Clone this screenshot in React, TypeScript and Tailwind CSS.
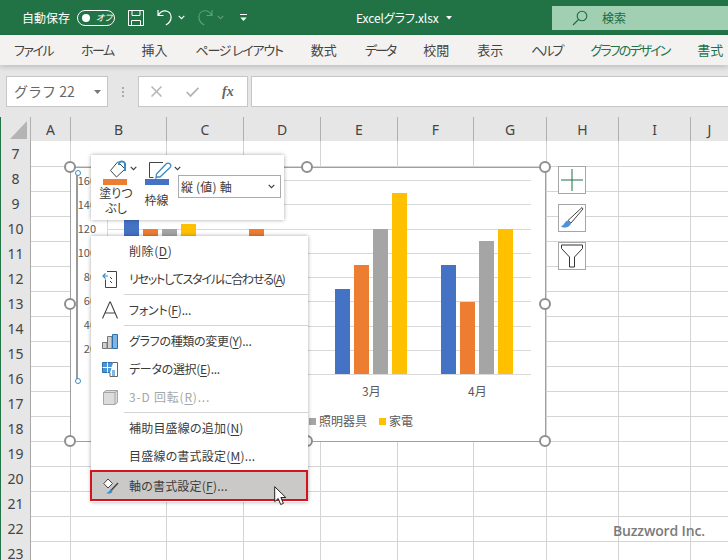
import React from "react";

const font = "[font-family:'Noto_Sans_CJK_JP',sans-serif] [font-feature-settings:'palt']";

const tabs = [
  { t: "ファイル", c: "tracking-[-1.5px]" },
  { t: "ホーム", c: "tracking-[-1.6px]" },
  { t: "挿入", c: "" },
  { t: "ページ レイアウト", c: "tracking-[-1.2px]" },
  { t: "数式", c: "" },
  { t: "データ", c: "tracking-[-2px]" },
  { t: "校閲", c: "" },
  { t: "表示", c: "" },
  { t: "ヘルプ", c: "tracking-[-2px]" },
  { t: "グラフのデザイン", c: "tracking-[-1.9px] text-[#217346]" },
  { t: "書式", c: "text-[#217346]" },
];
const cols = ["A", "B", "C", "D", "E", "F", "G", "H", "I", "J"];
const rows = [7, 8, 9, 10, 11, 12, 13, 14, 15, 16, 17, 18, 19, 20, 21, 22, 23];
const yLabels = ["160", "140", "120", "100", "80", "60", "40", "20"];

const groups = [
  [{ h: 160, c: "bg-[#4472c4]" }, { h: 145, c: "bg-[#ed7d31]" }, { h: 145, c: "bg-[#a5a5a5]" }, { h: 150, c: "bg-[#ffc000]" }],
  [{ h: 120, c: "bg-[#4472c4]" }, { h: 145, c: "bg-[#ed7d31]" }, { h: 100, c: "bg-[#a5a5a5]" }, { h: 120, c: "bg-[#ffc000]" }],
  [{ h: 85, c: "bg-[#4472c4]" }, { h: 109, c: "bg-[#ed7d31]" }, { h: 145, c: "bg-[#a5a5a5]" }, { h: 181, c: "bg-[#ffc000]" }],
  [{ h: 109, c: "bg-[#4472c4]" }, { h: 72, c: "bg-[#ed7d31]" }, { h: 133, c: "bg-[#a5a5a5]" }, { h: 145, c: "bg-[#ffc000]" }],
];

function Chevron({ className = "" }: { className?: string }) {
  return (
    <svg className={className} width="7" height="5" viewBox="0 0 7 5" fill="none" stroke="currentColor" strokeWidth="1.1">
      <path d="M0.7 0.8 3.5 3.6 6.3 0.8" />
    </svg>
  );
}

function Handle({ className }: { className: string }) {
  return <div className={`absolute w-[12px] h-[12px] rounded-full bg-white border-2 border-[#8f8f8f] ${className}`} />;
}

function Accel({ label, k, after = "", className = "tracking-[0.2px]" }: { label: string; k: string; after?: string; className?: string }) {
  return (
    <span className={className}>
      {label}(<span className="underline underline-offset-2">{k}</span>){after}
    </span>
  );
}

function MenuItem({ icon, children, muted, selected }: { icon?: React.ReactNode; children: React.ReactNode; muted?: boolean; selected?: boolean }) {
  return (
    <div
      className={`flex items-center ${selected ? "h-[31px] -ml-[1px] bg-[#cbc9c7] border-2 border-[#d2141c]" : "h-[28px]"} ${muted ? "text-[#a6a6a6]" : "text-[#3b3b3b]"}`}
    >
      <div className={`${selected ? "w-[37px]" : "w-[38px]"} flex justify-center shrink-0`}>{icon}</div>
      <div className="text-[12px] leading-none whitespace-nowrap">{children}</div>
    </div>
  );
}

function Separator() {
  return <div className="h-[1px] my-[1px] ml-[33px] mr-0 bg-[#d4d4d4]" />;
}

export default function App() {
  return (
    <div className={`relative w-[728px] h-[560px] overflow-hidden bg-white ${font}`}>
      {/* Title bar */}
      <div className="flex items-center h-[35px] bg-[#217346] text-white relative">
        <span className="ml-[22px] text-[12px]">自動保存</span>
        <div className="ml-[7px] w-[38px] h-[16px] rounded-full border border-white flex items-center pl-[4px] gap-[6px]">
          <div className="w-[8px] h-[8px] rounded-full bg-white" />
          <span className="text-[9px] leading-none italic">オフ</span>
        </div>
        <svg className="ml-[13px]" width="16" height="16" viewBox="0 0 16 16" fill="none" stroke="white" strokeWidth="1">
          <path d="M.5.5h15v15H.5zM4 .5v5h8v-5M3.5 15.5v-5h9v5" />
        </svg>
        <svg className="ml-[13px]" width="16" height="17" viewBox="0 0 16 17" fill="none" stroke="white" strokeWidth="1.2">
          <path d="M1 1v5.500h5.500M1.200 6.500C3 3 5.500 1.600 8.500 1.800c3 .3 5.600 2.700 5.600 6.200 0 3.500-2.300 6.500-5.300 8" />
        </svg>
        <Chevron className="ml-[5px]" />
        <svg className="ml-[12px]" width="16" height="17" viewBox="0 0 16 17" fill="none" stroke="#5f9f7d" strokeWidth="1.1">
          <path d="M15 1v5.500H9.500M14.800 6.500C13 3 10.500 1.600 7.500 1.800c-3 .3-5.600 2.700-5.600 6.200 0 3.500 2.300 6.500 5.300 8" />
        </svg>
        <Chevron className="ml-[4px] text-[#5f9f7d]" />
        <svg className="ml-[16px]" width="7" height="8" viewBox="0 0 7 8" fill="white">
          <path d="M0 0h7v1H0zM.3 3.500h6.400L3.500 7z" />
        </svg>
        <div className="absolute left-[356px] top-0 h-full flex items-center text-[12px] whitespace-nowrap tracking-[-0.1px]">
          Excelグラフ.xlsx
          <svg className="ml-[7px]" width="6" height="4" viewBox="0 0 6 4" fill="white">
            <path d="M0 0h6L3 3.500z" />
          </svg>
        </div>
        <div className="ml-auto self-start mt-[6px] w-[176px] h-[24px] bg-[#a0cfb2] flex items-center pl-[20px] text-[#1d6b3f]">
          <svg width="16" height="16" viewBox="0 0 16 16" fill="none" stroke="currentColor" strokeWidth="1.1">
            <circle cx="10" cy="6" r="4.800" />
            <path d="M6.500 9.500 1 15" />
          </svg>
          <span className="ml-[14px] text-[12px]">検索</span>
        </div>
      </div>

      {/* Ribbon tabs */}
      <div className="relative z-10 flex items-center gap-[28px] h-[30px] pl-[14px] bg-[#f3f2f1] text-[13px] text-[#444] whitespace-nowrap shadow-[0_2px_5px_rgba(0,0,0,0.18)]">
        {tabs.map((t) => (
          <span key={t.t} className={t.c}>{t.t}</span>
        ))}
      </div>

      {/* Formula bar */}
      <div className="flex items-start h-[52px] pt-[11px] pl-[6px] bg-[#e6e6e6]">
        <div className="w-[102px] h-[31px] bg-white border border-[#c6c6c6] flex items-center justify-between pl-[7px] pr-[6px] text-[14px] text-[#666] [font-feature-settings:normal]">
          <span>グラフ 22</span>
          <svg width="7" height="4" viewBox="0 0 7 4" fill="#777">
            <path d="M0 0h7L3.500 4z" />
          </svg>
        </div>
        <div className="w-[30px] h-[31px] flex flex-col items-center justify-center gap-[2px]">
          <div className="w-[2px] h-[2px] bg-[#aaa]" />
          <div className="w-[2px] h-[2px] bg-[#aaa]" />
          <div className="w-[2px] h-[2px] bg-[#aaa]" />
        </div>
        <div className="w-[110px] h-[31px] bg-white border border-[#c6c6c6] flex items-center pl-[12px]">
          <svg width="11" height="11" viewBox="0 0 11 11" stroke="#b5b5b5" strokeWidth="1.500" fill="none">
            <path d="M.5.5l10 10M10.500.5l-10 10" />
          </svg>
          <svg className="ml-[24px]" width="13" height="10" viewBox="0 0 13 10" stroke="#b5b5b5" strokeWidth="1.800" fill="none">
            <path d="M.8 5l3.700 4L12.500.8" />
          </svg>
          <span className="ml-[23px] text-[14px] font-bold italic text-[#666] [font-family:'Liberation_Serif',serif]">fx</span>
        </div>
        <div className="ml-[3px] flex-1 h-[31px] bg-white border-y border-l border-[#c6c6c6]" />
      </div>

      {/* Sheet grid */}
      <div className="grid grid-cols-[30px_40px_96px_77px_77px_77px_76px_73px_72px_72px_38px] auto-rows-[25px] bg-white border-l-2 border-[#217346] -ml-[1px]">
        <div className="h-[24px] bg-[#e6e6e6] border-r border-[#b0b0b0] flex items-end justify-end pr-[3px] pb-[2px]">
          <svg width="17" height="18" viewBox="0 0 17 18" fill="#b4b4b4">
            <path d="M17 0v18H0z" />
          </svg>
        </div>
        {cols.map((c) => (
          <div key={c} className="h-[24px] bg-[#e6e6e6] border-r border-[#b0b0b0] flex items-center justify-center text-[14px] text-[#444] [font-family:'Noto_Sans',sans-serif]">
            {c}
          </div>
        ))}
        {rows.map((r) => (
          <React.Fragment key={r}>
            <div className="-mt-[1px] bg-[#e6e6e6] border-r border-b border-[#a8a8a8] flex items-center justify-center text-[14px] text-[#444] [font-family:'Noto_Sans',sans-serif]">
              {r}
            </div>
            {cols.map((c) => (
              <div key={c} className="-mt-[1px] border-r border-b border-[#d4d4d4]" />
            ))}
          </React.Fragment>
        ))}
      </div>

      {/* Chart */}
      <div className="absolute left-[70px] top-[167px] w-[476px] h-[275px] bg-white border border-[#a0a0a0]">
        <div className="absolute left-[5px] top-[5px] h-[208px] border-l-2 border-[#9a9a9a]" />
        <div className="absolute left-[0px] top-[0px] w-[25px] flex flex-col items-end text-[11px] text-[#595959]">
          {yLabels.map((l) => (
            <div key={l} className="h-[24px] flex items-center">{l}</div>
          ))}
        </div>
        <div className="absolute left-[36px] top-[12px] w-[424px] h-[195px]">
          <div className="absolute inset-0 flex flex-col justify-between border-l border-[#d9d9d9]">
            {Array.from({ length: 9 }).map((_, i) => (
              <div key={i} className="h-[1px] bg-[#d9d9d9]" />
            ))}
          </div>
          <div className="absolute inset-0 flex items-end pl-[17px] pb-[1px] gap-[33.5px]">
            {groups.map((g, i) => (
              <div key={i} className="flex items-end gap-[4px]">
                {g.map((b, j) => (
                  <div key={j} className={`w-[15px] ${b.c}`} style={{ height: b.h }} />
                ))}
              </div>
            ))}
          </div>
        </div>
        <div className="absolute left-[291px] top-[214px] text-[12px] text-[#595959]">3月</div>
        <div className="absolute left-[397px] top-[214px] text-[12px] text-[#595959]">4月</div>
        <div className="absolute left-[238px] top-[244px] flex items-center text-[12px] text-[#595959]">
          <div className="w-[7px] h-[7px] bg-[#a5a5a5]" />
          <span className="ml-[3px]">照明器具</span>
          <div className="ml-[12px] w-[7px] h-[7px] bg-[#ffc000]" />
          <span className="ml-[3px]">家電</span>
        </div>
      </div>
      <Handle className="left-[64px] top-[161px]" />
      <Handle className="left-[64px] top-[298px]" />
      <Handle className="left-[64px] top-[435px]" />
      <Handle className="left-[301px] top-[161px]" />
      <Handle className="left-[301px] top-[435px]" />
      <Handle className="left-[539px] top-[161px]" />
      <Handle className="left-[539px] top-[298px]" />
      <Handle className="left-[539px] top-[435px]" />
      <div className="absolute left-[75px] top-[170px] w-[6px] h-[6px] rounded-full bg-white border border-[#3a8cc8]" />
      <div className="absolute left-[75px] top-[378px] w-[6px] h-[6px] rounded-full bg-white border border-[#3a8cc8]" />

      {/* Chart side buttons */}
      <div className="absolute left-[558px] top-[166px] flex flex-col gap-[10px]">
        <div className="w-[28px] h-[28px] bg-white border border-[#a6a6a6] flex items-center justify-center">
          <svg width="22" height="22" viewBox="0 0 22 22" stroke="#217346" strokeWidth="1">
            <path d="M11 0v22M0 11h22" />
          </svg>
        </div>
        <div className="w-[28px] h-[28px] bg-white border border-[#a6a6a6] flex items-center justify-center">
          <svg width="24" height="24" viewBox="0 0 24 24">
            <path d="M22 1.500 23 3 11 17l-3-2.500z" fill="white" stroke="#444" strokeWidth="1" />
            <path d="M8 14.500c-3 0-3.500 4.500-7 6 2 1.500 9 1.800 10-3.500z" fill="#4a94d8" />
          </svg>
        </div>
        <div className="w-[28px] h-[28px] bg-white border border-[#a6a6a6] flex items-center justify-center">
          <svg width="22" height="24" viewBox="0 0 22 24" fill="white" stroke="#333" strokeWidth="1">
            <path d="M.5 1h21v3.500L13.500 13v10h-5V13L.5 4.500z" />
          </svg>
        </div>
      </div>

      {/* Mini toolbar */}
      <div className="absolute left-[91px] top-[155px] w-[193px] h-[65px] bg-white shadow-[0_0_4px_rgba(0,0,0,0.35)] flex items-start text-[12px] text-[#3b3b3b] pl-[12px] gap-[10px]">
        <div className="flex flex-col items-center w-[31px]">
          <div className="flex items-end h-[24px] pl-[7px]">
            <svg width="20" height="19" viewBox="0 0 20 19" fill="none" stroke="#444" strokeWidth="1">
              <path d="M10 1.500 2.500 10.500l6 6.500 8.500-8-5-5" />
              <path d="M11 5V3c1-2 5-2 6 0.500V11" stroke="#3a8cc8" strokeWidth="2" />
            </svg>
            <Chevron className="ml-[2px] mb-[8px]" />
          </div>
          <div className="w-[24px] h-[6px] mr-[7px] bg-[#ed7d31]" />
          <div className="text-center text-[12px] leading-[15px] whitespace-nowrap mr-[5px]">塗りつ<br />ぶし</div>
        </div>
        <div className="flex flex-col items-center w-[33px]">
          <div className="flex items-end h-[24px] pl-[8px]">
            <svg width="23" height="17" viewBox="0 0 23 17" fill="none" stroke="#444" strokeWidth="1">
              <path d="M14 .5H.5v15h4" />
              <path d="M8 15l-1 1 .5-4L17 2c1-1 3-1 4 0s1 2.500 0 3.500L11 15z" stroke="#3a8cc8" strokeWidth="1.300" />
            </svg>
            <Chevron className="ml-[2px] mb-[8px]" />
          </div>
          <div className="w-[24px] h-[6px] mr-[8px] bg-[#4472c4]" />
          <div className="mt-[6px] mr-[8px] whitespace-nowrap">枠線</div>
        </div>
        <div className="mt-[20px] w-[103px] h-[23px] -ml-[9px] border border-[#ababab] flex items-center justify-between pl-[2px] pr-[5px] text-[12px] tracking-[0.2px]">
          <span>縦 (値) 軸</span>
          <Chevron />
        </div>
      </div>

      {/* Context menu */}
      <div className="absolute left-[91px] top-[236px] w-[217px] h-[266px] pt-[1px] bg-white shadow-[0_0_4px_rgba(0,0,0,0.35)]">
        <MenuItem><Accel label="削除" k="D" className="tracking-[0.6px]" /></MenuItem>
        <MenuItem
          icon={
            <svg width="16" height="17" viewBox="0 0 16 17" fill="none" stroke="#444" strokeWidth="1">
              <path d="M5 .5h9.500v16H3.500v-8M8 6l2 2M8 10l2 2" />
              <path d="M6 5H1.500M3.500 2.500 1 5l2.500 2.500" stroke="#3a8cc8" strokeWidth="1.200" />
            </svg>
          }
        >
          <Accel label="リセットしてスタイルに合わせる" k="A" className="tracking-[-1.2px]" />
        </MenuItem>
        <Separator />
        <MenuItem
          icon={
            <svg width="18" height="18" viewBox="0 0 18 18" fill="none" stroke="#444" strokeWidth="1.100">
              <path d="M1.500 17.500 8.800 1h.6L16.500 17.500M4 12h10" />
            </svg>
          }
        >
          <Accel label="フォント" k="F" after="..." className="tracking-[-0.2px]" />
        </MenuItem>
        <Separator />
        <MenuItem
          icon={
            <svg width="16" height="15" viewBox="0 0 16 15">
              <path d="M.5 8.500h4.500v6H.5z" fill="#d0d0d0" stroke="#777" />
              <path d="M5.500 2.500H10v12H5.500z" fill="#d0d0d0" stroke="#777" />
              <path d="M10.500.5h5v14h-5z" fill="#7db5e3" stroke="#2a6fb0" />
            </svg>
          }
        >
          <Accel label="グラフの種類の変更" k="Y" after="..." className="tracking-[-0.3px]" />
        </MenuItem>
        <MenuItem
          icon={
            <svg width="16" height="15" viewBox="0 0 16 15">
              <path d="M.5.500h10v10H.5z" fill="#4a94d8" stroke="#2a6fb0" />
              <path d="M.5 5.500h10M5.500.500v10" stroke="white" />
              <path d="M11 .5h4.500v14H8V11" fill="white" stroke="#666" />
              <path d="M10 8h3v6h-3z" fill="#7db5e3" />
            </svg>
          }
        >
          <Accel label="データの選択" k="E" after="..." className="tracking-[-0.3px]" />
        </MenuItem>
        <MenuItem
          muted
          icon={
            <svg width="15" height="15" viewBox="0 0 15 15">
              <path d="M.5 2.500 3 .5h11.500v12L12 14.500H.5z" fill="#dcdcdc" stroke="#a6a6a6" />
              <path d="M12 14.500v-12H.5M12 2.500l2.500-2" fill="none" stroke="#a6a6a6" />
            </svg>
          }
        >
          <span className="tracking-[0.8px]">3-D 回転(<span className="underline underline-offset-2">R</span>)...</span>
        </MenuItem>
        <Separator />
        <MenuItem><Accel label="補助目盛線の追加" k="N" /></MenuItem>
        <MenuItem><Accel label="目盛線の書式設定" k="M" after="..." /></MenuItem>
        <MenuItem
          selected
          icon={
            <svg width="16" height="16" viewBox="0 0 16 16" fill="none">
              <path d="M5 1 .8 5.500 5 10l4.500-4.500z" fill="white" stroke="#444" />
              <path d="M15 5 8 12.500" stroke="#444" strokeWidth="1.500" />
              <path d="M8 11.500c-2 .5-1.500 3-5 3.500 2 1 6 1 6.500-2z" fill="#3a8cc8" />
            </svg>
          }
        >
          <Accel label="軸の書式設定" k="F" after="..." />
        </MenuItem>
      </div>

      {/* Mouse cursor */}
      <svg className="absolute left-[274px] top-[486px]" width="14" height="20" viewBox="0 0 14 20">
        <path d="M.7.700v15l3.500-3.200 2.500 6 2.700-1.100-2.500-5.900h4.900z" fill="white" stroke="#222" strokeWidth="1" />
      </svg>

      <div className="absolute left-[613px] top-[520px] text-[14px] font-semibold text-[#7a7a7a] tracking-[-0.15px] [font-family:'Open_Sans',sans-serif]">Buzzword Inc.</div>
    </div>
  );
}
